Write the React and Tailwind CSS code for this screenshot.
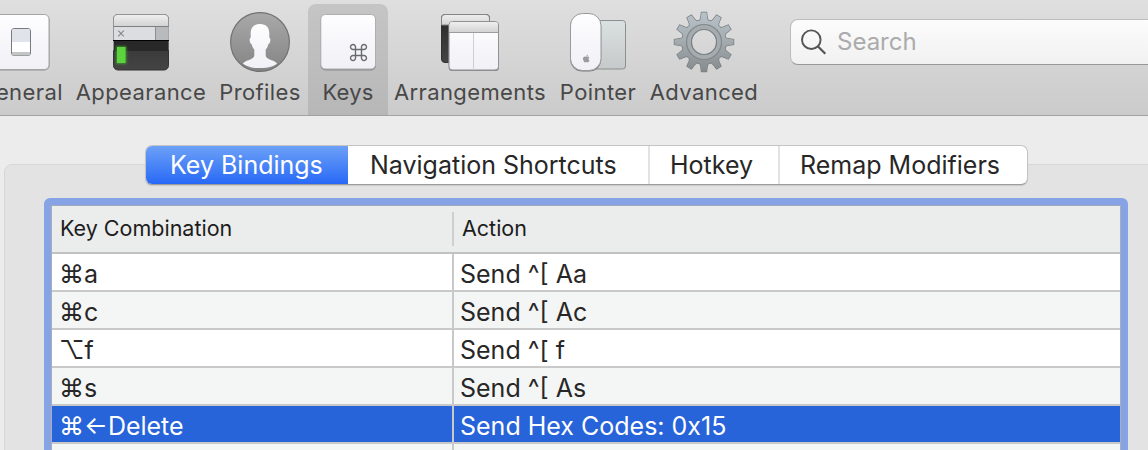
import React from "react";
import { FaApple } from "react-icons/fa";

const LOOP =
  "M6 6V3.6A2.5 2.5 0 1 0 3.6 6H14.4A2.5 2.5 0 1 0 12 3.6V14.4A2.5 2.5 0 1 0 14.4 12H3.6A2.5 2.5 0 1 0 6 14.4Z";

function Icon({ children }) {
  return (
    <svg width="64" height="64" viewBox="0 0 64 64" fill="none" className="block shrink-0">
      {children}
    </svg>
  );
}

function Defs() {
  return (
    <svg width="0" height="0" className="absolute">
      <defs>
        <linearGradient id="white" x1="0" y1="0" x2="0" y2="1">
          <stop offset="0" stopColor="#fefeff" />
          <stop offset="1" stopColor="#f0f0f6" />
        </linearGradient>
        <linearGradient id="bar" x1="0" y1="0" x2="0" y2="1">
          <stop offset="0" stopColor="#efefef" />
          <stop offset="1" stopColor="#d3d3d4" />
        </linearGradient>
        <linearGradient id="dark" x1="0" y1="0" x2="0" y2="1">
          <stop offset="0" stopColor="#292929" />
          <stop offset="1" stopColor="#444444" />
        </linearGradient>
        <linearGradient id="disc" x1="0" y1="0" x2="0" y2="1">
          <stop offset="0" stopColor="#a9a9a9" />
          <stop offset="1" stopColor="#848484" />
        </linearGradient>
        <linearGradient id="pad" x1="0" y1="0" x2="0" y2="1">
          <stop offset="0" stopColor="#dbe0e1" />
          <stop offset="1" stopColor="#c5c9c9" />
        </linearGradient>
        <linearGradient id="steel" x1="0" y1="0" x2="0" y2="1">
          <stop offset="0" stopColor="#b9c4ca" />
          <stop offset="0.5" stopColor="#a3abaf" />
          <stop offset="1" stopColor="#85898b" />
        </linearGradient>
        <filter id="glow" x="-50%" y="-50%" width="200%" height="200%">
          <feGaussianBlur stdDeviation="1.3" />
        </filter>
      </defs>
    </svg>
  );
}

function GeneralIcon() {
  return (
    <Icon>
      <rect x="4.5" y="5.2" width="56" height="55.3" rx="5" fill="#8f8f92" />
      <rect x="4.5" y="4.5" width="55.5" height="55" rx="4.5" fill="url(#white)" stroke="#a4a4a6" />
      <rect x="22.5" y="18.5" width="19" height="27" rx="2.5" fill="#fff" stroke="#777a80" />
      <path d="M23 21a2 2 0 0 1 2-2h14a2 2 0 0 1 2 2v11H23z" fill="#e0e3e9" />
      <path d="M23 42h18v1.500a2 2 0 0 1-2 2H25a2 2 0 0 1-2-2z" fill="#c4c6c6" />
    </Icon>
  );
}

function AppearanceIcon() {
  return (
    <Icon>
      <rect x="4.500" y="4.500" width="55" height="55.500" rx="4.500" fill="url(#dark)" stroke="#333" />
      <path d="M4.500 40V9a4.500 4.500 0 0 1 4.500-4.500h46a4.500 4.500 0 0 1 4.500 4.500v31z" fill="#dcdde0" stroke="#949494" />
      <path d="M5 16V9a4 4 0 0 1 4-4h46a4 4 0 0 1 4 4v7z" fill="url(#bar)" />
      <path d="M4.500 16.500h55" stroke="#7e7f80" />
      <rect x="46" y="17" width="13.500" height="13" fill="#b9babc" />
      <path d="M46.500 17v13" stroke="#8e8f91" />
      <path d="M5 30h54.500v11H5z" fill="#282828" />
      <path d="M4 30.500h56" stroke="#000" />
      <path d="m9.200 20.700 5.600 5.600m0-5.600-5.600 5.600" stroke="#85868a" strokeWidth="1.100" />
      <rect x="7" y="36" width="10.500" height="18" fill="#45c52c" opacity=".6" filter="url(#glow)" />
      <rect x="8" y="37" width="8.500" height="16" fill="#5bd33c" />
    </Icon>
  );
}

function ProfilesIcon() {
  return (
    <Icon>
      <circle cx="32" cy="32" r="29.400" fill="url(#disc)" stroke="#727272" strokeWidth="1.200" />
      <path
        d="M32 14c6.800 0 9.500 4.300 9.300 10v4c1.200 0 1.200 1.500.9 3-.3 1.700-.8 3-1.900 3.200-.4 2.300-1.300 4-2.600 5.300v5.800c0 3.800 5.400 4.200 8.800 6.300 1.400.8 2 1.400 2.600 2.200A27 27 0 0 1 32 58a27 27 0 0 1-17.100-4.200c.6-.8 1.200-1.400 2.600-2.200 3.400-2.100 8.800-2.500 8.800-6.300v-5.800c-1.300-1.300-2.200-3-2.600-5.300-1.100-.2-1.600-1.500-1.900-3.200-.3-1.500-.3-3 .9-3v-4c-.2-5.700 2.500-10 9.300-10z"
        fill="url(#white)"
      />
    </Icon>
  );
}

function KeysIcon() {
  return (
    <Icon>
      <rect x="4.500" y="6" width="55.500" height="54.500" rx="5" fill="#8b8b8d" />
      <rect x="4.800" y="4.500" width="54.700" height="54.500" rx="4.500" fill="url(#white)" stroke="#aeaeb0" />
      <path d={LOOP} transform="translate(33.500 33.500)" stroke="#6a6b6e" strokeWidth="1.400" />
    </Icon>
  );
}

function ArrangementsIcon() {
  return (
    <Icon>
      <rect x="3.500" y="4.500" width="48" height="48" rx="3.500" fill="url(#dark)" stroke="#303030" />
      <path d="M3.500 15V8A3.500 3.500 0 0 1 7 4.500h41A3.500 3.500 0 0 1 51.500 8v7z" fill="url(#bar)" stroke="#858585" />
      <rect x="10.700" y="12" width="50.300" height="49" rx="3.500" fill="#88898b" />
      <rect x="11" y="11.500" width="49.500" height="48.500" rx="3.500" fill="url(#white)" stroke="#909193" />
      <path d="M11.500 22v-7a3 3 0 0 1 3-3H57a3 3 0 0 1 3 3v7z" fill="url(#bar)" />
      <path d="M11 22.500h49.500" stroke="#9b9c9e" />
      <path d="M35.500 23v36.500" stroke="#cfd0d3" />
    </Icon>
  );
}

function PointerIcon() {
  return (
    <Icon>
      <rect x="24" y="10.500" width="35.500" height="48.500" rx="3" fill="url(#pad)" stroke="#8b8f90" />
      <rect x="4.200" y="4.500" width="31" height="57" rx="12" fill="#777a7b" />
      <rect x="4.500" y="3.500" width="30.500" height="57" rx="12" fill="url(#white)" stroke="#97999c" />
      <FaApple x="15.800" y="44" width="8.500" height="9" size={9} color="#9b9b9f" />
    </Icon>
  );
}

function AdvancedIcon() {
  const teeth = Array.from({ length: 12 }, (_, i) => i * 30);
  return (
    <Icon>
      <g stroke="#777d81" strokeWidth="1.400">
        {teeth.map((a) => (
          <path key={a} d="M27.300 12.500 28.800 8l.7-5.500h5l.7 5.500 1.500 4.500z" transform={`rotate(${a} 32 32)`} />
        ))}
        <circle cx="32" cy="32" r="22" />
      </g>
      <mask id="gear">
        <g fill="#fff">
          {teeth.map((a) => (
            <path key={a} d="M27.300 12.500 28.800 8l.7-5.500h5l.7 5.500 1.500 4.500z" transform={`rotate(${a} 32 32)`} />
          ))}
          <circle cx="32" cy="32" r="22" />
        </g>
        <circle cx="32" cy="32" r="12.500" fill="#000" />
      </mask>
      <rect x="1" y="1" width="62" height="62" fill="url(#steel)" mask="url(#gear)" />
      <circle cx="32" cy="32" r="15" stroke="#a5acb0" strokeWidth="5" />
      <circle cx="32" cy="32" r="17.500" stroke="#81878a" strokeWidth="1.200" />
      <circle cx="32" cy="32" r="12.500" stroke="#777d80" strokeWidth="1.200" />
    </Icon>
  );
}

const tools = [
  { label: "General", icon: GeneralIcon, cls: "w-[98px] -ml-7", text: "tracking-[0.4px]" },
  { label: "Appearance", icon: AppearanceIcon, cls: "w-[142px]", text: "tracking-[0.4px]" },
  { label: "Profiles", icon: ProfilesIcon, cls: "w-24", text: "tracking-[0.4px]" },
  { label: "Keys", icon: KeysIcon, cls: "w-20 rounded-t-lg bg-linear-to-b from-[#c5c5c5] to-[#b7b7b7]", text: "tracking-[0.2px] text-[#2b2b2b]" },
  { label: "Arrangements", icon: ArrangementsIcon, cls: "w-[164px]", text: "tracking-[0.4px]" },
  { label: "Pointer", icon: PointerIcon, cls: "w-[92px]", text: "tracking-[0.4px]" },
  { label: "Advanced", icon: AdvancedIcon, cls: "w-[120px]", text: "tracking-[0.4px]" },
];

const rows = [
  ["⌘a", "Send ^[ Aa"],
  ["⌘c", "Send ^[ Ac"],
  ["⌥f", "Send ^[ f"],
  ["⌘s", "Send ^[ As"],
  ["⌘←Delete", "Send Hex Codes: 0x15"],
  ["", ""],
];

function Toolbar() {
  return (
    <header className="flex h-[116px] shrink-0 border-b border-[#a2a2a2] bg-linear-to-b from-[#dfdfdf] to-[#cbcbcb] pt-1">
      {tools.map(({ label, icon: Glyph, cls, text }) => (
        <div key={label} className={`flex shrink-0 flex-col items-center pt-1.5 ${cls}`}>
          <Glyph />
          <span className={`mt-1 whitespace-nowrap text-[22px] leading-7 text-[#484848] ${text}`}>{label}</span>
        </div>
      ))}
      <div className="mt-[15px] -mr-4 ml-[26px] flex h-[46px] flex-1 items-center rounded-lg border border-[#bcbcbc] border-b-[#999] bg-linear-to-b from-[#fcfcfc] to-[#f1f1f1] pl-2.5">
        <svg width="26" height="26" viewBox="0 0 26 26" fill="none" stroke="#555" strokeWidth="1.900">
          <circle cx="10.300" cy="10.700" r="9.300" />
          <path d="m16.800 17.300 7.500 7.500" strokeWidth="2.200" />
        </svg>
        <span className="ml-2.5 text-2xl text-[#ababab]">Search</span>
      </div>
    </header>
  );
}

function Tabs() {
  return (
    <nav className="z-10 ml-[145px] flex h-10 w-[883px] shrink-0 overflow-hidden rounded-[7px] border border-[#c4c4c4] border-b-[#9c9c9c] bg-white text-[25px] leading-[38px] text-[#272727] shadow-[0_1px_1px_rgba(0,0,0,0.12)]">
      <div className="-my-px -ml-px w-[203px] bg-linear-to-b from-[#6ea1f6] to-[#2666f6] pl-[25px] leading-10 whitespace-nowrap text-white">Key Bindings</div>
      <div className="w-[302px] border-r-2 border-[#e2e2e2] pl-[22px] whitespace-nowrap">Navigation Shortcuts</div>
      <div className="w-[130px] border-r-2 border-[#e2e2e2] pl-5 whitespace-nowrap">Hotkey</div>
      <div className="flex-1 pl-5 whitespace-nowrap">Remap Modifiers</div>
    </nav>
  );
}

function BindingsTable() {
  return (
    <div className="mx-[39px] mt-[33px] h-[300px] w-[1084px] shrink-0 rounded-t-[6px] bg-[#86a3e6] px-[7px] pt-[7px]">
      <div className="h-full border border-[#a9adb8] border-t-[#a2a9bd] bg-white">
        <div className="flex h-12 border-b-2 border-[#c2c2c2] bg-[#ebecec] text-[21.5px] leading-[45px] text-[#1c1c1c]">
          <div className="w-[400px] pl-2">Key Combination</div>
          <div className="my-1.5 flex h-[34px] border-l-2 border-[#cfcfcf] pl-2 leading-[33px]">Action</div>
        </div>
        {rows.map(([key, action], i) => (
          <div
            key={i}
            className={`flex h-[38px] border-b-2 border-[#c9c9ca] pt-px text-[25px] leading-10 whitespace-pre ${
              i === 4 ? "bg-[#2763d9] text-white" : i % 2 ? "bg-[#f4f5f5] text-[#272727]" : "bg-white text-[#272727]"
            }`}
          >
            <div className="-mt-px w-[400px] pl-[7px]">{key}</div>
            <div className="-mt-px h-[36px] border-l-2 border-[#c9c9ca] pl-1.5">{action}</div>
          </div>
        ))}
      </div>
    </div>
  );
}

export default function App() {
  return (
    <div className="flex h-[450px] w-[1148px] flex-col overflow-hidden bg-[#ececec] font-['Inter','DejaVu_Sans',sans-serif]">
      <Defs />
      <Toolbar />
      <main className="flex flex-1 flex-col overflow-hidden pt-[29px]">
        <Tabs />
        <section className="-mt-[21px] ml-1 h-[320px] w-[1200px] shrink-0 rounded-lg border border-[#d7d7d7] bg-[#e3e3e3]">
          <BindingsTable />
        </section>
      </main>
    </div>
  );
}
